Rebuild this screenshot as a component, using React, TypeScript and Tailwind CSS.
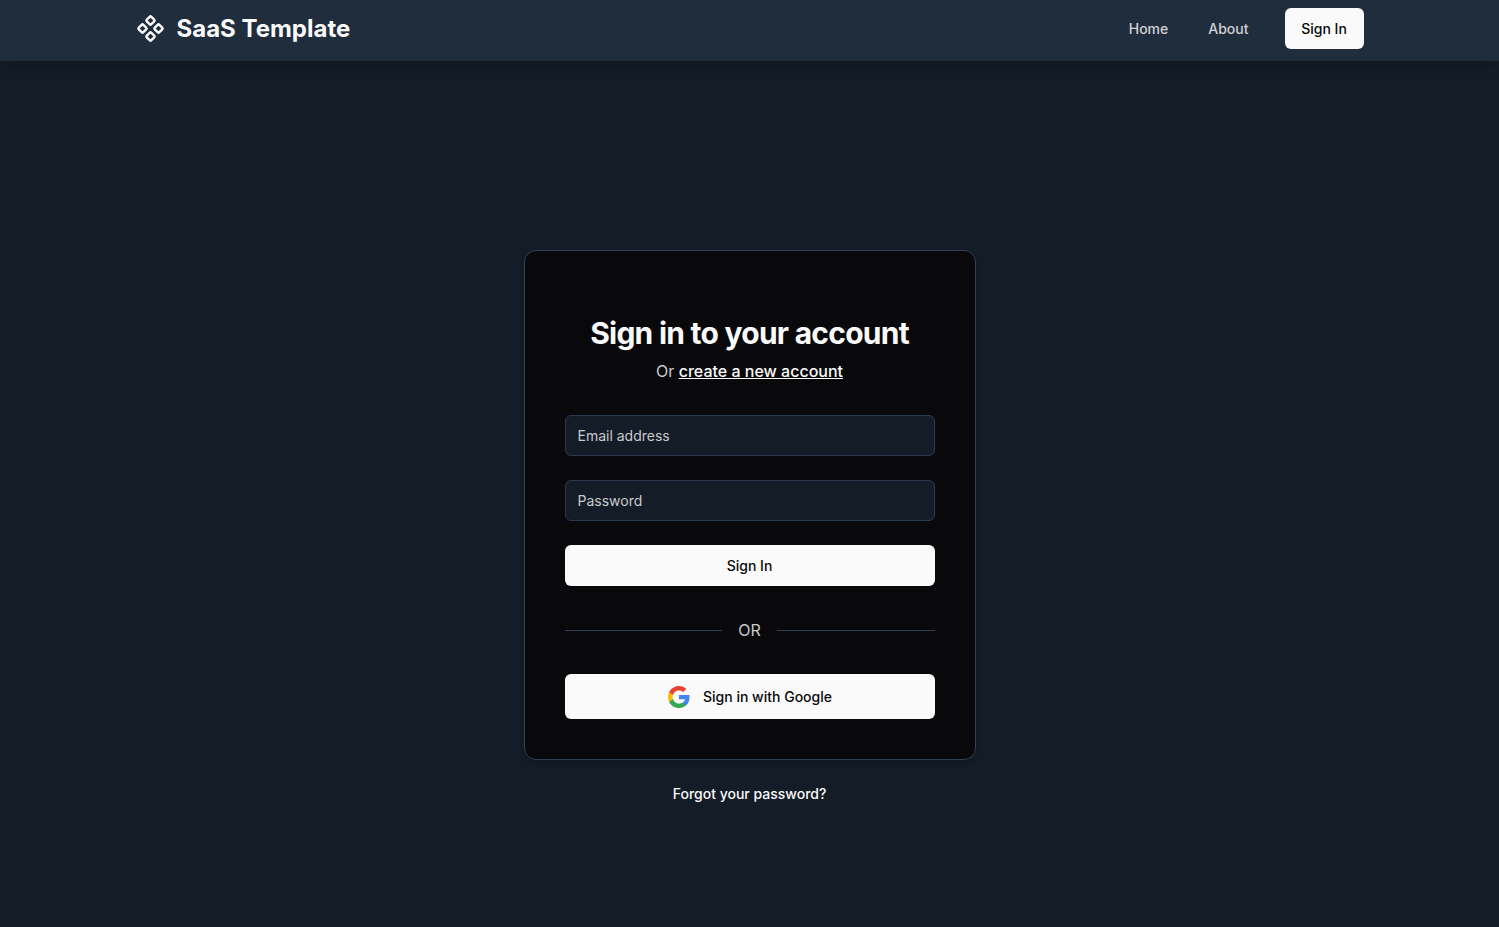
import { Component } from "lucide-react";

function GoogleIcon() {
  return (
    <svg viewBox="0 0 24 24" className="size-6" aria-hidden="true">
      <path fill="#4285F4" d="M22.56 12.25c0-.78-.07-1.53-.2-2.25H12v4.26h5.92c-.26 1.37-1.04 2.53-2.21 3.31v2.77h3.57c2.08-1.92 3.28-4.74 3.28-8.09z" />
      <path fill="#34A853" d="M12 23c2.97 0 5.46-.98 7.28-2.66l-3.57-2.77c-.98.66-2.23 1.06-3.71 1.06-2.86 0-5.29-1.93-6.16-4.53H2.18v2.84C3.99 20.53 7.7 23 12 23z" />
      <path fill="#FBBC05" d="M5.84 14.09c-.22-.66-.35-1.36-.35-2.09s.13-1.43.35-2.09V7.07H2.18C1.43 8.55 1 10.22 1 12s.43 3.45 1.18 4.93l2.85-2.22.81-.62z" />
      <path fill="#EA4335" d="M12 5.38c1.62 0 3.06.56 4.21 1.64l3.15-3.15C17.45 2.09 14.97 1 12 1 7.7 1 3.99 3.47 2.18 7.07l3.66 2.84c.87-2.6 3.3-4.53 6.16-4.53z" />
    </svg>
  );
}

function Header() {
  return (
    <header className="bg-[#202d3d] shadow-lg">
      <div className="mx-auto flex max-w-[1228px] items-center justify-between pt-2 pb-3">
        <a href="#" className="flex items-center gap-3 text-2xl font-bold text-[#fafafa]">
          <Component className="size-[29px]" aria-hidden="true" />
          SaaS Template
        </a>
        <nav className="flex items-center gap-9 text-sm font-medium">
          <div className="flex gap-10 text-[#d0d2d6]">
            <a href="#">Home</a>
            <a href="#">About</a>
          </div>
          <button type="button" className="h-[41px] min-w-[79px] rounded-md bg-[#fafafa] px-4 text-[#09090b]">
            Sign In
          </button>
        </nav>
      </div>
    </header>
  );
}

const fieldClass =
  "block h-[41px] w-full rounded-md border border-[#2a3850] bg-[#141c27] px-3 text-sm text-[#fafafa] placeholder:text-[#c9cacd]";

export default function App() {
  return (
    <div className="flex min-h-screen flex-col bg-[#141c27] font-['Inter',sans-serif] text-[#fafafa]">
      <Header />
      <main className="flex grow flex-col items-center justify-center px-4 pt-[66px]">
        <section className="w-full max-w-[452px] rounded-xl border border-[#334058] bg-[#09090b] px-10 pt-16 pb-10 shadow-md">
          <h1 className="text-center text-3xl font-bold tracking-tight">Sign in to your account</h1>
          <p className="mt-2 text-center text-base text-[#c9cacd]">
            Or{" "}
            <a href="#" className="font-medium text-[#fafafa] underline">
              create a new account
            </a>
          </p>
          <form className="mt-8 flex flex-col gap-6" onSubmit={(e) => e.preventDefault()}>
            <input type="email" aria-label="Email address" placeholder="Email address" className={fieldClass} />
            <input type="password" aria-label="Password" placeholder="Password" className={fieldClass} />
            <button type="submit" className="h-[41px] rounded-md bg-[#fafafa] text-sm font-medium text-[#09090b]">
              Sign In
            </button>
          </form>
          <div className="my-8 flex items-center gap-4 text-base text-[#c9cacd]">
            <span className="h-px grow bg-[#334058]" />
            OR
            <span className="h-px grow bg-[#334058]" />
          </div>
          <button
            type="button"
            className="flex h-[45px] w-full items-center justify-center gap-3 rounded-md bg-[#fafafa] text-sm font-medium text-[#09090b]"
          >
            <GoogleIcon />
            Sign in with Google
          </button>
        </section>
        <a href="#" className="mt-6 text-sm font-medium">
          Forgot your password?
        </a>
      </main>
    </div>
  );
}
